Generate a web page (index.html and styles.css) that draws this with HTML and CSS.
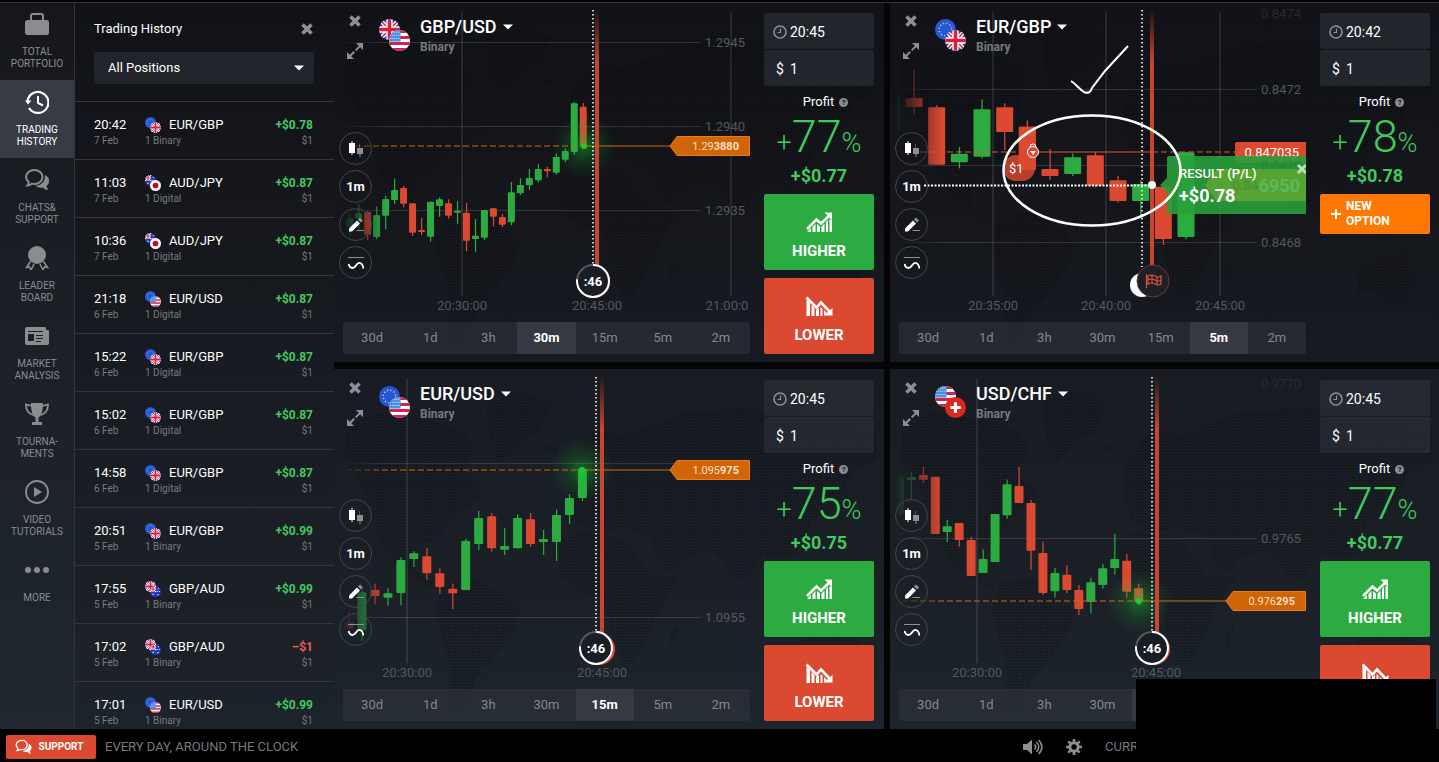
FILE: index.html
```html
<!DOCTYPE html>
<html lang="en">
<head>
    <meta charset="UTF-8">
    <meta name="viewport" content="width=device-width, initial-scale=1.0">
    <title>Trading Room</title>
    <link rel="stylesheet" href="styles.css">
</head>
<body>
    <!-- shared icons, flags and chart paints -->
    <svg class="sprite" aria-hidden="true">
        <defs>
            <linearGradient id="fade-left" gradientUnits="userSpaceOnUse" x1="0" y1="0" x2="52" y2="0">
                <stop offset="0.1" stop-color="#000"/>
                <stop offset="1" stop-color="#fff"/>
            </linearGradient>
            <mask id="mask-left" maskUnits="userSpaceOnUse" x="0" y="0" width="2000" height="1000">
                <rect width="2000" height="1000" fill="url(#fade-left)"/>
            </mask>
            <linearGradient id="fade-red" gradientUnits="userSpaceOnUse" x1="0" y1="6" x2="0" y2="60">
                <stop offset="0" stop-color="#db4931" stop-opacity="0"/>
                <stop offset="1" stop-color="#db4931"/>
            </linearGradient>
            <radialGradient id="glow">
                <stop offset="0" stop-color="#12c92c" stop-opacity="0.45"/>
                <stop offset="0.5" stop-color="#12c92c" stop-opacity="0.15"/>
                <stop offset="1" stop-color="#12c92c" stop-opacity="0"/>
            </radialGradient>
            <pattern id="dots" width="3" height="3" patternUnits="userSpaceOnUse">
                <rect width="2" height="2" fill="#000" fill-opacity="0.2"/>
            </pattern>
        </defs>
        <symbol id="map" viewBox="0 0 550 360">
            <g fill="url(#dots)">
                <path d="M12 60L40 44L90 50L130 62L140 80L128 104L150 128L118 150L100 172L84 176L80 200L96 212L110 224L90 216L62 196L44 168L30 120L10 90Z"/>
                <path d="M152 34L186 22L218 36L206 62L186 74L166 94L156 74Z"/>
                <path d="M208 78L222 74L226 82L214 84Z"/>
                <path d="M112 212L140 208L170 226L186 242L180 262L160 290L142 310L130 340L114 342L116 300L108 268L100 238Z"/>
                <path d="M238 88L262 60L290 66L350 44L410 38L470 46L542 62L544 92L520 100L500 140L478 150L470 184L452 190L430 186L412 212L398 206L378 180L350 190L336 206L322 190L318 170L290 158L262 164L240 150L232 118Z"/>
                <path d="M226 172L250 162L290 170L316 206L346 206L326 240L314 268L300 294L288 296L278 268L270 230L244 222L224 206Z"/>
                <path d="M336 264L344 256L342 274L334 280Z"/>
                <path d="M466 270L488 254L502 258L512 248L528 276L522 300L500 304L484 290L468 292Z"/>
            </g>
        </symbol>
        <symbol id="flag-eu" viewBox="0 0 20 20">
            <rect width="20" height="20" fill="#2458dc"/>
            <circle cx="10" cy="10" r="6" fill="none" stroke="#d8c860" stroke-width="1.4" stroke-dasharray="1.2 1.94"/>
        </symbol>
        <symbol id="flag-gb" viewBox="0 0 20 20">
            <rect width="20" height="20" fill="#2a45b8"/>
            <path d="M0 0L20 20M20 0L0 20" stroke="#fff" stroke-width="4"/>
            <path d="M0 0L20 20M20 0L0 20" stroke="#d8213f" stroke-width="1.4"/>
            <path d="M10 0V20M0 10H20" stroke="#fff" stroke-width="6"/>
            <path d="M10 0V20M0 10H20" stroke="#d8213f" stroke-width="3.4"/>
        </symbol>
        <symbol id="flag-us" viewBox="0 0 20 20">
            <rect width="20" height="20" fill="#fff"/>
            <path d="M0 1.4H20M0 7.1H20M0 12.8H20M0 18.5H20" stroke="#d3234c" stroke-width="2.8"/>
            <rect width="11" height="11" fill="#4a90e2"/>
            <path d="M1 2H11M1 5H11M1 8H11" stroke="#cfe2fa" stroke-width="1" stroke-dasharray="1 1"/>
        </symbol>
        <symbol id="flag-au" viewBox="0 0 20 20">
            <rect width="20" height="20" fill="#2238b8"/>
            <path d="M0 0L11 11M11 0L0 11" stroke="#fff" stroke-width="2"/>
            <path d="M5.5 0V11M0 5.5H11" stroke="#fff" stroke-width="3.5"/>
            <path d="M5.5 0V11M0 5.5H11" stroke="#d8213f" stroke-width="2"/>
            <path d="M4 15h3M14 5h2M12 10h2M16 10h2M13 16h3" stroke="#fff" stroke-width="1.6"/>
        </symbol>
        <symbol id="flag-jp" viewBox="0 0 20 20">
            <rect width="20" height="20" fill="#fff"/>
            <circle cx="10" cy="10" r="5.2" fill="#c00d2d"/>
        </symbol>
        <symbol id="flag-ch" viewBox="0 0 20 20">
            <rect width="20" height="20" fill="#d9291c"/>
            <path d="M10 5V15M5 10H15" stroke="#fff" stroke-width="3"/>
        </symbol>
        <symbol id="i-close" viewBox="0 0 12 12">
            <path d="M1.5 1.5L10.5 10.5M10.5 1.5L1.5 10.5" fill="none" stroke="currentColor" stroke-width="3.6"/>
        </symbol>
        <symbol id="i-expand" viewBox="0 0 16 16">
            <path d="M9 0h7v7zM0 9v7h7z" fill="currentColor"/>
            <path d="M3 13L13 3" stroke="currentColor" stroke-width="2" stroke-dasharray="6 2 6"/>
        </symbol>
        <symbol id="i-caret" viewBox="0 0 10 6">
            <path d="M0 0.5h10L5 5.5z" fill="currentColor"/>
        </symbol>
        <symbol id="i-case" viewBox="0 0 24 24">
            <rect y="8" width="24" height="15" rx="2.5" fill="currentColor"/>
            <path d="M6 9V4a2 2 0 0 1 2-2h8a2 2 0 0 1 2 2v5" fill="none" stroke="currentColor" stroke-width="2"/>
        </symbol>
        <symbol id="i-history" viewBox="0 0 24 24">
            <path d="M2.5 11A10.5 10.5 0 1 1 4 18" fill="none" stroke="currentColor" stroke-width="2.2"/>
            <path d="M0 10.5h6.500L3 14.500z" fill="currentColor"/>
            <path d="M13 6v7l5 2.500" fill="none" stroke="currentColor" stroke-width="2"/>
        </symbol>
        <symbol id="i-chat" viewBox="0 0 24 24">
            <path d="M20 7c6 3 4.500 9 1.500 11l1.500 4c-3 0-4-1.500-5-2.500-3 .5-6 0-7.500-2C16 18 20.500 13 20 7z" fill="currentColor"/>
            <path d="M9.500 2C14 2 17.500 5 17.500 9s-3.500 7-8 7c-1 0-2-.2-2.600-.4C5.500 17 4 17.500 2.500 17.500c1-1 1.300-2.200 1.200-3.500C2 12.500 1 11 1 9c0-4 4-7 8.500-7z" fill="none" stroke="currentColor" stroke-width="2"/>
        </symbol>
        <symbol id="i-medal" viewBox="0 0 24 24">
            <circle cx="12" cy="9" r="9" fill="currentColor"/>
            <path d="M5.500 15.500L1.500 21.500l3-.5 1.500 3 3-6M18.500 15.500l4 6-3-.5-1.500 3-3-6" fill="none" stroke="currentColor" stroke-width="1.600"/>
        </symbol>
        <symbol id="i-news" viewBox="0 0 24 24">
            <path d="M2 3h18a1 1 0 0 1 1 1v2h2a1 1 0 0 1 1 1v12a2 2 0 0 1-2 2H2a2 2 0 0 1-2-2V5a2 2 0 0 1 2-2z" fill="currentColor"/>
            <path d="M3 7.500h15M11 11.500h7M11 14.500h7M11 17.500h5" stroke="#1c2027" stroke-width="1.200"/>
            <path d="M3 10h6v7H3z" fill="#1c2027"/>
        </symbol>
        <symbol id="i-cup" viewBox="0 0 24 24">
            <path d="M6 1h12c0 8-1.500 13-4.500 14.500V20H17v3H7v-3h3.500v-4.500C7.500 14 6 9 6 1z" fill="currentColor"/>
            <path d="M7 4L1 2.500C1 9 4 12 8.500 13M17 4l6-1.500C23 9 20 12 15.500 13" fill="none" stroke="currentColor" stroke-width="1.800"/>
        </symbol>
        <symbol id="i-play" viewBox="0 0 24 24">
            <circle cx="12" cy="12" r="11" fill="none" stroke="currentColor" stroke-width="1.800"/>
            <path d="M9 7l8 5-8 5z" fill="currentColor"/>
        </symbol>
        <symbol id="i-more" viewBox="0 0 24 24">
            <circle cx="3" cy="12" r="3" fill="currentColor"/>
            <circle cx="12" cy="12" r="3" fill="currentColor"/>
            <circle cx="21" cy="12" r="3" fill="currentColor"/>
        </symbol>
        <symbol id="i-clock" viewBox="0 0 14 14">
            <circle cx="7" cy="7" r="6" fill="none" stroke="currentColor" stroke-width="1.600"/>
            <path d="M7.500 3.500v4h-3" fill="none" stroke="currentColor" stroke-width="1.200"/>
        </symbol>
        <symbol id="i-higher" viewBox="0 0 27 20">
            <path d="M1 17L10.500 7.500l4.500 4L24 3" fill="none" stroke="currentColor" stroke-width="2.600"/>
            <path d="M18.500 0.500H26V8z" fill="currentColor"/>
            <path d="M1 20l4-4v4zM6.500 15l3-3v8h-3zM11 12l3 2.500V20h-3zM15.500 14.500l3-3V20h-3zM20 10l2-2v12h-2zM23.500 7l2.500 1v12h-2.500z" fill="currentColor"/>
        </symbol>
        <symbol id="i-lower" viewBox="0 0 27 20">
            <path d="M0.500 1.500L10.500 11.500l4.500-5L23.500 15.500" fill="none" stroke="currentColor" stroke-width="2.600"/>
            <path d="M26.500 12v7.500H18z" fill="currentColor"/>
            <path d="M0.500 3l3.500 4v13H.5zM5.500 9l3 3v8h-3zM10 14l3-2v8h-3zM14.500 11l2 1.500V20h-2zM18 14l3 3-3 3z" fill="currentColor"/>
        </symbol>
        <symbol id="i-candles" viewBox="0 0 16 16">
            <path d="M3.500 0h1v2H7v10H4.500v2h-1v-2H1V2h2.500z" fill="#fff"/>
            <path d="M12 3v4h3v6h-2.500v3h-1v-3H9V7h2.500V3z" fill="#8d8f93"/>
        </symbol>
        <symbol id="i-pencil" viewBox="0 0 16 16">
            <path d="M1 11.500L9 3.500l3 3L4 14.500H1z" fill="#fff"/>
            <path d="M10 2.500L12 0.500l3 3L13 5.500z" fill="#8d8f93"/>
            <path d="M8.500 13.500H16" stroke="#8d8f93"/>
        </symbol>
        <symbol id="i-wave" viewBox="0 0 16 16">
            <path d="M0 2.500H16" stroke="#8d8f93"/>
            <path d="M0.500 9c1 4.500 5 5.500 7.500 1.500s6.500-3.500 7.500 3" fill="none" stroke="#fff" stroke-width="1.800"/>
        </symbol>
        <symbol id="i-volume" viewBox="0 0 20 16">
            <path d="M0 5h4l5-4.500v15L4 11H0z" fill="currentColor"/>
            <path d="M11.500 5.500c1.500 1.500 1.500 3.500 0 5M13.500 3c3 3 3 7 0 10M15.500 1c4.500 4 4.500 10 0 14" fill="none" stroke="currentColor" stroke-width="1.500"/>
        </symbol>
        <symbol id="i-gear" viewBox="0 0 16 16">
            <circle cx="8" cy="8" r="4.200" fill="none" stroke="currentColor" stroke-width="3"/>
            <path d="M8 0v3M8 13v3M0 8h3M13 8h3M2.300 2.300l2 2M11.700 11.700l2 2M13.700 2.300l-2 2M4.300 11.700l-2 2" stroke="currentColor" stroke-width="2.600"/>
        </symbol>
    </svg>

    <div class="app">
        <nav class="sidebar" id="sidebar"></nav>

        <aside class="history">
            <div class="history-head">
                <h2>Trading History</h2>
                <button class="icon-btn" aria-label="Close history"><svg width="12" height="12"><use href="#i-close"/></svg></button>
            </div>
            <div class="filter">
                <select aria-label="Positions filter">
                    <option>All Positions</option>
                    <option>Binary</option>
                    <option>Digital</option>
                </select>
                <svg class="filter-caret" width="10" height="6"><use href="#i-caret"/></svg>
            </div>
            <ul class="deals" id="deals"></ul>
        </aside>

        <main class="charts" id="charts"></main>
    </div>

    <footer class="statusbar">
        <button class="support"><svg width="17" height="16"><use href="#i-chat"/></svg>SUPPORT</button>
        <span class="slogan">EVERY DAY, AROUND THE CLOCK</span>
        <button class="icon-btn" aria-label="Sound"><svg width="20" height="16"><use href="#i-volume"/></svg></button>
        <button class="icon-btn gear" aria-label="Settings"><svg width="16" height="16"><use href="#i-gear"/></svg></button>
        <span class="clock">CURRENT</span>
    </footer>
    <div class="cover"></div>

    <script src="script.js"></script>
</body>
</html>
```
FILE: styles.css
```css
* {
    box-sizing: border-box;
}
body {
    margin: 0;
    height: 100vh;
    padding-top: 2px;
    display: flex;
    flex-direction: column;
    overflow: hidden;
    background: #050506;
    color: #fff;
    font-family: Roboto, "Liberation Sans", sans-serif;
    font-size: 13px;
    line-height: 16px;
}
button, select, input {
    font: inherit;
    color: inherit;
    border: 0;
    padding: 0;
    margin: 0;
    background: none;
}
button {
    cursor: pointer;
}
svg {
    display: block;
}
.sprite {
    position: absolute;
    width: 0;
    height: 0;
}
.icon-btn {
    color: #8d8f93;
}
.app {
    flex: 1;
    min-height: 0;
    display: flex;
    position: relative;
    overflow: hidden;
}
.app::before {
    content: "";
    position: absolute;
    top: 0;
    left: 0;
    right: 0;
    height: 1px;
    background: #333437;
    z-index: 5;
}

/* left menu */
.sidebar {
    width: 75px;
    flex: none;
    border-right: 1px solid #32353c;
    background: linear-gradient(#16171b, #1b1f26 40%, #20272f);
}
.sidebar a {
    display: flex;
    flex-direction: column;
    align-items: center;
    gap: 10px;
    height: 78px;
    padding-top: 10px;
    color: #8a8c90;
    font-size: 10px;
    line-height: 12px;
    text-align: center;
    text-decoration: none;
    white-space: pre-line;
}
.sidebar a.active {
    background: #363b44;
    color: #fff;
}

/* history */
.history {
    width: 259px;
    flex: none;
    overflow: hidden;
    background: linear-gradient(#111217, #181b21 50%, #1d232a);
}
.history-head {
    display: flex;
    justify-content: space-between;
    align-items: center;
    padding: 19px 21px 0 19px;
}
.history-head h2 {
    margin: 0;
    font-size: 13px;
    font-weight: 400;
}
.filter {
    position: relative;
    margin: 15px 20px 17px 19px;
}
.filter select {
    width: 100%;
    height: 32px;
    padding: 0 14px;
    border-radius: 2px;
    background: #21242b;
    appearance: none;
}
.filter-caret {
    position: absolute;
    right: 10px;
    top: 13px;
    pointer-events: none;
}
.deals {
    list-style: none;
    margin: 0;
    padding: 0;
}
.deals li {
    display: flex;
    height: 58px;
    padding: 15px 21px 0 19px;
    border-top: 1px solid #34363c;
}
.deals small {
    display: block;
    font-size: 10px;
    color: #77797d;
}
.deal-time {
    width: 51px;
}
.deal-name {
    display: flex;
    gap: 8px;
}
.deal-sum {
    margin-left: auto;
    text-align: right;
    font-size: 12px;
    font-weight: 700;
    color: #41c95f;
}
.deal-sum small {
    font-weight: 400;
}
.deal-sum.loss {
    color: #e85a5c;
}
.flags {
    display: flex;
    width: 16px;
}
.flags svg {
    flex: none;
    width: 11px;
    height: 11px;
    border-radius: 50%;
}
.flags svg + svg {
    margin: 5px 0 0 -6px;
}
.flags.big {
    width: 31px;
}
.flags.big svg {
    width: 21px;
    height: 21px;
}
.flags.big svg + svg {
    margin: 11px 0 0 -11px;
}

/* charts */
.charts {
    flex: 1;
    min-width: 0;
    margin-right: -1px;
    display: grid;
    grid-template-columns: 1fr 1fr;
    grid-template-rows: 1fr 1fr;
    gap: 7px 6px;
}
.panel {
    position: relative;
    display: grid;
    grid-template-columns: 1fr 110px;
    column-gap: 14px;
    padding-right: 10px;
    min-height: 0;
    background: linear-gradient(#111217, #14161b 50%, #171a21);
}
.panel:nth-child(n+3) {
    background: linear-gradient(#181b22, #1b2027 60%, #1d242b);
}
.map {
    position: absolute;
    top: 0;
    left: 0;
    width: 550px;
    height: 360px;
}
.chart {
    position: relative;
    display: flex;
    flex-direction: column;
}
.plot {
    position: absolute;
    top: 0;
    left: 0;
    width: 100%;
    height: 100%;
    overflow: hidden;
    font-size: 13px;
}
.plot .grid {
    stroke: #fff;
    stroke-opacity: 0.12;
    stroke-width: 1.5;
}
.plot .axis {
    fill: #54575c;
}
.plot .dim {
    fill: #282a2f;
}
.plot .up {
    fill: #2cac40;
}
.plot .down {
    fill: #db4931;
}
.plot .price-line {
    stroke: #c76a12;
    stroke-width: 1.2;
}
.plot .tag {
    fill: #d06508;
    stroke: #ee7d12;
}
.plot .tag-text {
    fill: #f8dfc6;
    font-size: 11px;
}
.plot .red-line {
    stroke: #e0543c;
    stroke-width: 1.2;
    fill: none;
}
.plot .bold {
    font-weight: 700;
}
.plot .timer-text {
    font-size: 13px;
    font-weight: 700;
    fill: #fff;
}
.plot .result-sum {
    font-size: 18px;
    font-weight: 700;
}
.plot .result-ghost {
    fill: #238636;
}
.plot .result-small {
    fill: #43933a;
}
.plot .result-price {
    fill: #5cba5b;
    font-size: 18px;
}
.chart-head {
    position: relative;
    display: flex;
    height: 130px;
    padding: 13px 0 0 13px;
}
.head-controls {
    display: flex;
    flex-direction: column;
    align-items: center;
    width: 16px;
    gap: 16px;
    margin-right: 16px;
}
.chart-head .flags {
    margin: 4px 10px 0 0;
}
.asset {
    display: flex;
    align-items: center;
    gap: 6px;
    height: 23px;
    font-size: 18px;
    font-weight: 500;
}
.asset-kind {
    font-size: 12px;
    line-height: 18px;
    font-weight: 700;
    color: #77797d;
}
.tools {
    position: relative;
    display: flex;
    flex-direction: column;
    gap: 5px;
    padding-left: 5px;
}
.tools button {
    display: grid;
    place-items: center;
    width: 33px;
    height: 33px;
    border: 1px solid #43464c;
    border-radius: 50%;
    font-weight: 700;
}
.frames {
    position: relative;
    display: flex;
    height: 32px;
    margin: auto 0 8px 9px;
    border-radius: 2px;
    overflow: hidden;
    background: rgba(52, 56, 64, 0.5);
}
.frames button {
    flex: 1;
    color: #85878c;
}
.frames .current {
    background: #363941;
    color: #fff;
    font-weight: 700;
}

/* order column */
.order {
    position: relative;
    padding: 11px 0 8px;
    display: flex;
    flex-direction: column;
    text-align: center;
}
.field {
    display: flex;
    align-items: center;
    height: 36px;
    padding: 1px 0 0 9px;
    background: rgba(44, 48, 56, 0.65);
    font-size: 14px;
    border-radius: 2px;
}
.field + .field {
    margin-top: 1px;
}
.field svg {
    color: #8d8f93;
}
.field span {
    width: 14px;
}
.field input {
    width: 70px;
    padding-left: 3px;
}
.profit-label {
    display: flex;
    justify-content: center;
    align-items: center;
    gap: 5px;
    margin: 8px 0 0 13px;
}
.help {
    width: 9px;
    height: 9px;
    border-radius: 50%;
    background: #8d8f93;
    color: #14161b;
    font-size: 8px;
    line-height: 9px;
    font-weight: 700;
}
.percent {
    display: flex;
    justify-content: center;
    align-items: baseline;
    height: 54px;
    line-height: 54px;
    font-size: 45px;
    font-weight: 300;
    color: #41c95f;
}
.percent span {
    font-size: 27px;
}
.gain {
    height: 30px;
    line-height: 24px;
    font-size: 18px;
    font-weight: 700;
    color: #41c95f;
}
.trade {
    display: flex;
    flex-direction: column;
    align-items: center;
    justify-content: center;
    gap: 10px;
    height: 76px;
    padding-top: 7px;
    border-radius: 2px;
    font-size: 15px;
    line-height: 18px;
    font-weight: 700;
}
.trade + .trade {
    margin-top: 8px;
}
.higher {
    background: #2cac40;
}
.lower {
    background: #db4931;
}
.new-option {
    display: flex;
    align-items: center;
    gap: 5px;
    height: 40px;
    padding-left: 11px;
    border-radius: 2px;
    background: #ff7802;
    font-size: 12px;
    line-height: 15px;
    font-weight: 700;
    text-align: left;
}

/* bottom bar */
.statusbar {
    display: flex;
    align-items: center;
    height: 33px;
    flex: none;
    padding: 3px 0 0 6px;
    background: #000;
    color: #77797d;
}
.support {
    display: flex;
    align-items: center;
    justify-content: center;
    gap: 7px;
    width: 90px;
    height: 24px;
    padding-right: 4px;
    border-radius: 2px;
    background: #db4931;
    color: #fff;
    font-size: 10px;
    font-weight: 700;
}
.slogan {
    margin: 0 auto 0 9px;
}
.gear {
    margin: 0 23px;
}
.clock {
    width: 334px;
}
.cover {
    position: fixed;
    right: 3px;
    bottom: 0;
    width: 300px;
    height: 83px;
    background: #000;
    z-index: 10;
}
```
FILE: script.js
```js
const menu = [
    ['case', 'TOTAL\nPORTFOLIO'],
    ['history', 'TRADING\nHISTORY'],
    ['chat', 'CHATS&\nSUPPORT'],
    ['medal', 'LEADER\nBOARD'],
    ['news', 'MARKET\nANALYSIS'],
    ['cup', 'TOURNA-\nMENTS'],
    ['play', 'VIDEO\nTUTORIALS'],
    ['more', 'MORE']
];

const deals = [
    ['20:42', '7 Feb', 'EUR/GBP', '1 Binary', '+$0.78'],
    ['11:03', '7 Feb', 'AUD/JPY', '1 Digital', '+$0.87'],
    ['10:36', '7 Feb', 'AUD/JPY', '1 Digital', '+$0.87'],
    ['21:18', '6 Feb', 'EUR/USD', '1 Digital', '+$0.87'],
    ['15:22', '6 Feb', 'EUR/GBP', '1 Digital', '+$0.87'],
    ['15:02', '6 Feb', 'EUR/GBP', '1 Digital', '+$0.87'],
    ['14:58', '6 Feb', 'EUR/GBP', '1 Digital', '+$0.87'],
    ['20:51', '5 Feb', 'EUR/GBP', '1 Binary', '+$0.99'],
    ['17:55', '5 Feb', 'GBP/AUD', '1 Binary', '+$0.99'],
    ['17:02', '5 Feb', 'GBP/AUD', '1 Binary', '\u2013$1'],
    ['17:01', '5 Feb', 'EUR/USD', '1 Binary', '+$0.99']
];

const frames = ['30d', '1d', '3h', '30m', '15m', '5m', '2m'];

// candles: [direction, wick top, body top, body bottom, wick bottom], SCALE steps to a pixel
const SCALE = 3;
const panels = [
    {
        pair: 'GBP/USD', frame: '30m', time: '20:45', percent: 77,
        rows: [[40, '1.2945'], [124, '1.2940'], [208, '1.2935']],
        cols: [[128, '20:30:00'], [263, '20:45:00'], [397, '21:00:0']],
        noLine: 263, price: { x: 250, y: 144, small: '1.29', big: '3880' },
        now: 259, expiry: 263,
        x0: 47, step: 26.95, width: 7, shift: 2,
        candles: [
            ['u', 640, 655, 680, 715], ['u', 612, 640, 655, 690], ['d', 632, 636, 704, 720],
            ['u', 620, 645, 711, 718], ['u', 587, 597, 647, 688], ['u', 536, 570, 600, 612],
            ['d', 558, 564, 611, 622], ['d', 610, 610, 698, 708], ['d', 654, 690, 696, 705],
            ['u', 605, 605, 710, 725], ['u', 592, 598, 618, 650], ['d', 598, 610, 647, 656],
            ['u', 604, 632, 638, 671], ['d', 609, 638, 722, 754], ['u', 657, 707, 717, 756],
            ['u', 630, 630, 713, 720], ['d', 625, 625, 650, 679], ['d', 642, 651, 674, 681],
            ['u', 546, 577, 667, 676], ['u', 534, 555, 580, 585], ['u', 507, 534, 556, 570],
            ['u', 493, 507, 541, 547], ['d', 500, 507, 514, 532], ['u', 460, 471, 518, 524],
            ['u', 446, 453, 479, 486], ['u', 306, 310, 456, 464], ['d', 309, 320, 438, 443]
        ]
    },
    {
        pair: 'EUR/GBP', frame: '5m', time: '20:42', percent: 78, closed: true,
        rows: [[87, '0.8472'], [163, ''], [240, '0.8468']],
        dim: [11, '0.8474'],
        cols: [[103, '20:35:00'], [216, '20:40:00'], [330, '20:45:00']],
        now: 252, expiry: 262,
        x0: 4, step: 68, width: 17, shift: 2,
        candles: [
            ['u', 288, 288, 395, 395], ['d', 207, 294, 321, 344], ['d', 315, 322, 494, 494],
            ['u', 441, 461, 487, 505], ['u', 298, 328, 470, 476], ['d', 310, 322, 396, 450],
            ['d', 362, 380, 510, 510], ['d', 447, 507, 528, 540], ['u', 460, 472, 522, 528],
            ['d', 457, 466, 557, 562], ['d', 528, 541, 603, 608], ['u', 540, 552, 603, 652],
            ['d', 560, 560, 717, 735], ['u', 457, 457, 711, 718]
        ]
    },
    {
        pair: 'EUR/USD', frame: '15m', time: '20:45', percent: 75,
        rows: [[94, ''], [248, '1.0955']],
        cols: [[73, '20:30:00'], [268, '20:45:00']],
        noLine: 268, price: { x: 248, y: 101, small: '1.095', big: '975' },
        now: 262, expiry: 268,
        x0: 45, step: 38.9, width: 9, shift: 4,
        candles: [
            ['d', 738, 772, 790, 795], ['u', 676, 682, 795, 828], ['d', 656, 675, 693, 717],
            ['u', 670, 685, 698, 722], ['u', 577, 585, 684, 721], ['u', 559, 565, 582, 606],
            ['d', 549, 574, 625, 644], ['d', 610, 625, 666, 686], ['d', 656, 671, 685, 732],
            ['u', 521, 528, 675, 675], ['u', 438, 459, 537, 555], ['d', 444, 454, 550, 560],
            ['u', 489, 543, 554, 570], ['u', 448, 459, 550, 550], ['d', 444, 463, 537, 546],
            ['u', 495, 522, 531, 570], ['u', 434, 450, 531, 588], ['u', 388, 399, 450, 477],
            ['u', 306, 312, 399, 408]
        ]
    },
    {
        pair: 'USD/CHF', frame: '15m', time: '20:45', percent: 77,
        rows: [[169, '0.9765']],
        dim: [14, '0.9770'],
        cols: [[87, '20:30:00'], [266, '20:45:00']],
        noLine: 266, price: { x: 249, y: 232, small: '0.976', big: '295' },
        now: 262, expiry: 267,
        x0: 28, step: 35.9, width: 9, shift: 4,
        candles: [
            ['u', 325, 335, 450, 455], ['u', 321, 336, 345, 405], ['d', 306, 330, 344, 353],
            ['d', 335, 335, 507, 507], ['u', 465, 484, 501, 531], ['d', 474, 474, 525, 545],
            ['d', 516, 525, 633, 633], ['u', 553, 582, 624, 624], ['u', 447, 447, 591, 591],
            ['u', 344, 358, 451, 461], ['d', 306, 363, 414, 414], ['d', 404, 414, 557, 615],
            ['d', 530, 564, 684, 690], ['u', 609, 624, 679, 698], ['d', 600, 629, 675, 684],
            ['d', 660, 675, 732, 750], ['u', 638, 652, 711, 745], ['u', 597, 610, 660, 671],
            ['u', 507, 582, 609, 629], ['d', 567, 587, 680, 698], ['d', 656, 670, 711, 720]
        ]
    }
];

const flagCodes = { EUR: 'eu', GBP: 'gb', USD: 'us', AUD: 'au', JPY: 'jp', CHF: 'ch' };

function icon(name, w, h) {
    return `<svg width="${w}" height="${h}" aria-hidden="true"><use href="#i-${name}"/></svg>`;
}

function flags(pair, cls) {
    const imgs = pair.split('/').map(c => `<svg><use href="#flag-${flagCodes[c]}"/></svg>`).join('');
    return `<span class="flags ${cls}">${imgs}</span>`;
}

function drawCandles(p) {
    return p.candles.map((c, i) => {
        const x = (p.x0 + i * p.step) / SCALE;
        const [top, open, close, bottom] = c.slice(1).map(v => v / SCALE - p.shift);
        return `<g class="${c[0] === 'u' ? 'up' : 'down'}">
            <rect x="${x - 0.5}" y="${top}" width="1.2" height="${bottom - top}"/>
            <rect x="${x - p.width / 2}" y="${open}" width="${p.width}" height="${close - open}" rx="1"/></g>`;
    }).join('');
}

function drawGrid(p) {
    let out = '';
    p.rows.forEach(([y, label]) => {
        out += `<rect class="grid-line" mask="url(#mask-left)" x="8" y="${y}" width="359" height="1" fill="#fff" opacity="0.13"/>`;
        out += `<text class="axis" x="411" y="${y + 5}" text-anchor="end">${label}</text>`;
    });
    p.cols.forEach(([x, label]) => {
        if (x !== p.noLine) out += `<path class="grid" d="M${x} 10V294"/>`;
        out += `<text class="axis" x="${Math.min(x, 393)}" y="308" text-anchor="middle">${label}</text>`;
    });
    if (p.dim) out += `<text class="dim" x="411" y="${p.dim[0] + 5}" text-anchor="end">${p.dim[1]}</text>`;
    return out;
}

function drawExpiry(p) {
    return `<rect x="${p.expiry - 2}" y="6" width="4" height="258" fill="url(#fade-red)" opacity="0.9"/>
        <path d="M${p.now} 8V265" stroke="#fff" stroke-width="1.6" stroke-dasharray="1.6 2.4"/>`;
}

function drawPrice(p) {
    const { x, y, small, big } = p.price;
    return `<circle cx="${x}" cy="${y}" r="32" fill="url(#glow)"/>
        <path class="price-line" mask="url(#mask-left)" stroke-dasharray="6 3" d="M12 ${y + 0.01}L${x} ${y}"/>
        <path class="price-line" d="M${x} ${y}H336"/>
        <circle cx="${x}" cy="${y}" r="3" fill="#20c935"/>
        <path class="tag" d="M336 ${y}L343 ${y - 9.5}H415.5V${y + 9.5}H343Z"/>
        <text class="tag-text" x="405" y="${y + 4}" text-anchor="end">${small}<tspan class="bold">${big}</tspan></text>`;
}

function drawTimer(p) {
    return `<circle cx="${p.expiry - 3}" cy="280" r="16" class="down"/>
        <circle cx="${p.now}" cy="279" r="16" fill="#191d24" stroke="#55585e" stroke-width="2"/>
        <circle cx="${p.now}" cy="279" r="16" fill="none" stroke="#fff" stroke-width="2" pathLength="60" stroke-dasharray="46 14" transform="rotate(-90 ${p.now} 279)"/>
        <text class="timer-text" x="${p.now}" y="284" text-anchor="middle">:46</text>`;
}

// open deal marker, result badge and hand-drawn notes
function drawResult(p) {
    return `<rect x="113" y="153" width="32" height="26" rx="13" fill="#b93f2d"/>
        <path class="red-line" mask="url(#mask-left)" stroke-dasharray="6 3" d="M30 150.01L143 150"/>
        <path class="red-line" d="M143 150H262"/>
        <path class="red-line" stroke-dasharray="6 3" d="M262 150H345"/>
        ${drawCandles({ ...p, x0: p.x0 + 6 * p.step, candles: [p.candles[6]] })}
        <text x="119" y="171" fill="#fff">$1</text>
        <circle cx="143" cy="145" r="3" fill="#db4931" stroke="#fff"/>
        <circle cx="143" cy="150" r="5.5" fill="#db4931" stroke="#fff"/>
        <path d="M140 149h6l-3 4z" fill="#fff"/>
        <rect x="345" y="140" width="73" height="21" rx="2" fill="#db4931"/>
        <text x="409" y="155" text-anchor="end" fill="#fff">0.847035</text>
        <path d="M277 156a2 2 0 0 1 2-2H416V212H279a2 2 0 0 1-2-2V190l-7-7 7-7Z" fill="#28a03b" fill-opacity="0.9"/>
        <text class="result-ghost" x="411" y="168" text-anchor="end">0.8470</text>
        <path d="M315 183l12-16H416V199H327z" fill="#5fa432" fill-opacity="0.85"/>
        <text class="result-small" x="368" y="188" text-anchor="end">0.84</text>
        <text class="result-price bold" x="410" y="190" text-anchor="end">6950</text>
        <text x="289" y="176" fill="#fff" font-weight="500">RESULT (P/L)</text>
        <text class="result-sum" x="289" y="200" fill="#fff">+$0.78</text>
        <path d="M408 163l8 8M416 163l-8 8" stroke="#b8dfbd" stroke-width="3"/>
        <path d="M34 183.500H262" stroke="#fff" stroke-width="2" stroke-dasharray="2 1.500"/>
        <circle cx="262" cy="183" r="4" fill="#fff"/>
        <circle cx="252" cy="283" r="12" fill="#fff"/>
        <circle cx="263" cy="279" r="16" fill="#1e2027" stroke="#71352f"/>
        <path class="red-line" d="M256.500 272v14M258 274q3.500-2 7 0t6 0v8q-3 2-6 0t-7 0zM258 278q3.500-2 7 0t6 0M262 273v8M267 275v8"/>
        <ellipse cx="202" cy="168.500" rx="88.500" ry="55" fill="none" stroke="#fff" stroke-width="2.500"/>
        <path d="M181 79c5 3 8 8 13 11 4 2 7 0 8-4l13-17 23-25" fill="none" stroke="#fff" stroke-width="2"/>`;
}

function drawPanel(p) {
    const buttons = p.closed
        ? `<button class="new-option"><svg width="10" height="10"><path d="M5 0V10M0 5H10" stroke="#fff" stroke-width="2"/></svg>NEW<br>OPTION</button>`
        : `<button class="trade higher">${icon('higher', 27, 20)}HIGHER</button>
           <button class="trade lower">${icon('lower', 27, 20)}LOWER</button>`;
    return `<section class="panel">
        <svg class="map"><use href="#map"/></svg>
        <div class="chart">
            <svg class="plot">
                ${drawGrid(p)}
                <g mask="url(#mask-left)">${drawCandles(p)}</g>
                ${p.price ? drawPrice(p) : ''}
                ${drawExpiry(p)}
                ${p.closed ? drawResult(p) : drawTimer(p)}
            </svg>
            <div class="chart-head">
                <div class="head-controls">
                    <button class="icon-btn" aria-label="Close chart">${icon('close', 12, 12)}</button>
                    <button class="icon-btn" aria-label="Expand chart">${icon('expand', 16, 16)}</button>
                </div>
                ${flags(p.pair, 'big')}
                <div>
                    <button class="asset">${p.pair}${icon('caret', 10, 6)}</button>
                    <div class="asset-kind">Binary</div>
                </div>
            </div>
            <div class="tools">
                <button aria-label="Chart type">${icon('candles', 16, 16)}</button>
                <button>1m</button>
                <button aria-label="Draw">${icon('pencil', 16, 16)}</button>
                <button aria-label="Indicators">${icon('wave', 16, 16)}</button>
            </div>
            <div class="frames">
                ${frames.map(f => `<button class="${f === p.frame ? 'current' : ''}">${f}</button>`).join('')}
            </div>
        </div>
        <div class="order">
            <label class="field">${icon('clock', 14, 14)}<input aria-label="Expiration" value="${p.time}"></label>
            <label class="field"><span>$</span><input aria-label="Amount" value="1"></label>
            <div class="profit-label">Profit <span class="help">?</span></div>
            <div class="percent"><span>+</span>${p.percent}<span>%</span></div>
            <div class="gain">+$0.${p.percent}</div>
            ${buttons}
        </div>
    </section>`;
}

document.getElementById('sidebar').innerHTML = menu.map(([name, label], i) =>
    `<a href="#" class="${i === 1 ? 'active' : ''}">${icon(name, 24, 24)}<span>${label}</span></a>`).join('');

document.getElementById('deals').innerHTML = deals.map(([time, date, pair, type, sum]) =>
    `<li>
        <div class="deal-time">${time}<small>${date}</small></div>
        <div><div class="deal-name">${flags(pair, '')}${pair}</div><small>${type}</small></div>
        <div class="deal-sum ${sum[0] === '+' ? '' : 'loss'}">${sum}<small>$1</small></div>
    </li>`).join('');

document.getElementById('charts').innerHTML = panels.map(drawPanel).join('');
```
